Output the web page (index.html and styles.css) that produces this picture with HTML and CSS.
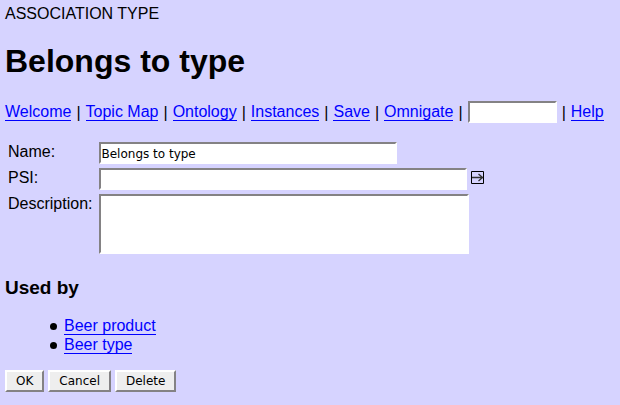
FILE: index.html
```html
<!DOCTYPE html>
<html lang="en">
<head>
<meta charset="utf-8">
<title>Belongs to type</title>
<link rel="stylesheet" href="styles.css">
</head>
<body>
<p class="kind">ASSOCIATION TYPE</p>
<h1>Belongs to type</h1>
<nav class="menu">
<a href="#">Welcome</a><span>|</span>
<a href="#">Topic Map</a><span>|</span>
<a href="#">Ontology</a><span>|</span>
<a href="#">Instances</a><span>|</span>
<a href="#">Save</a><span>|</span>
<a href="#">Omnigate</a><span>|</span>
<input class="field search" type="text" aria-label="Search"><span>|</span>
<a href="#">Help</a>
</nav>
<form>
<div class="fields">
<label for="name">Name:</label>
<div class="cell"><input class="field name" id="name" type="text" value="Belongs to type"></div>
<label for="psi">PSI:</label>
<div class="cell"><input class="field psi" id="psi" type="text"><a class="go" href="#" aria-label="Open PSI"><svg width="13" height="13" viewBox="0 0 13 13" fill="none"><path d="M.5 .5h12v12H.5z" stroke="#000"/><path d="M1 6.5h11M7.500 3L11.500 6.500L7.500 10" stroke="#333" stroke-width="1.300"/></svg></a></div>
<label for="description">Description:</label>
<div class="cell"><textarea class="field description" id="description"></textarea></div>
</div>
<h2>Used by</h2>
<ul>
<li><a href="#">Beer product</a></li>
<li><a href="#">Beer type</a></li>
</ul>
<div class="actions"><button type="button">OK</button><button type="button">Cancel</button><button type="button">Delete</button></div>
</form>
</body>
</html>
```
FILE: styles.css
```css
* { box-sizing: border-box; }
body {
  margin: 0;
  padding: 4px 5px;
  background: #d6d3ff;
  color: #000;
  font: 16px/19px "Liberation Sans", Arial, sans-serif;
}
a { color: #00f; text-decoration: none; border-bottom: 1px solid #00f; }
.kind { margin: 0; }
h1 { margin: 19px 0 21px; font-size: 32px; line-height: 38px; }
.menu { display: flex; flex-wrap: wrap; align-items: center; gap: 5px; }
.menu a, li a { line-height: 16px; }
.field {
  border: 2px solid;
  border-color: #848284 #fff #fff #848284;
  border-radius: 0;
  background: #fff;
  padding: 0;
  height: 22px;
  font: 12px/16px "DejaVu Sans", sans-serif;
  outline: 0;
}
.search { width: 89px; }
.fields {
  display: grid;
  grid-template-columns: max-content 1fr;
  gap: 4px 7px;
  margin: 19px 3px 0;
}
.cell { display: flex; align-items: flex-start; gap: 4px; }
.name { width: 298px; padding-top: 1px; }
.psi { width: 368px; }
.description { width: 370px; height: 60px; resize: none; }
.go { display: flex; border: 0; margin-top: 3px; }
h2 { margin: 23px 0 18px; font-size: 19px; line-height: 22px; }
ul { margin: 0 0 15px; padding-left: 45px; list-style: none; }
li { display: flex; align-items: center; gap: 7px; min-height: 19px; }
li::before {
  content: "";
  width: 7px;
  height: 7px;
  border-radius: 50%;
  background: #000;
}
.actions { display: flex; gap: 4px; }
button {
  height: 22px;
  padding: 0 9px;
  border: 2px solid;
  border-color: #fff #848284 #848284 #fff;
  background: #eee;
  color: #000;
  font: 12px/16px "DejaVu Sans", sans-serif;
}
```
